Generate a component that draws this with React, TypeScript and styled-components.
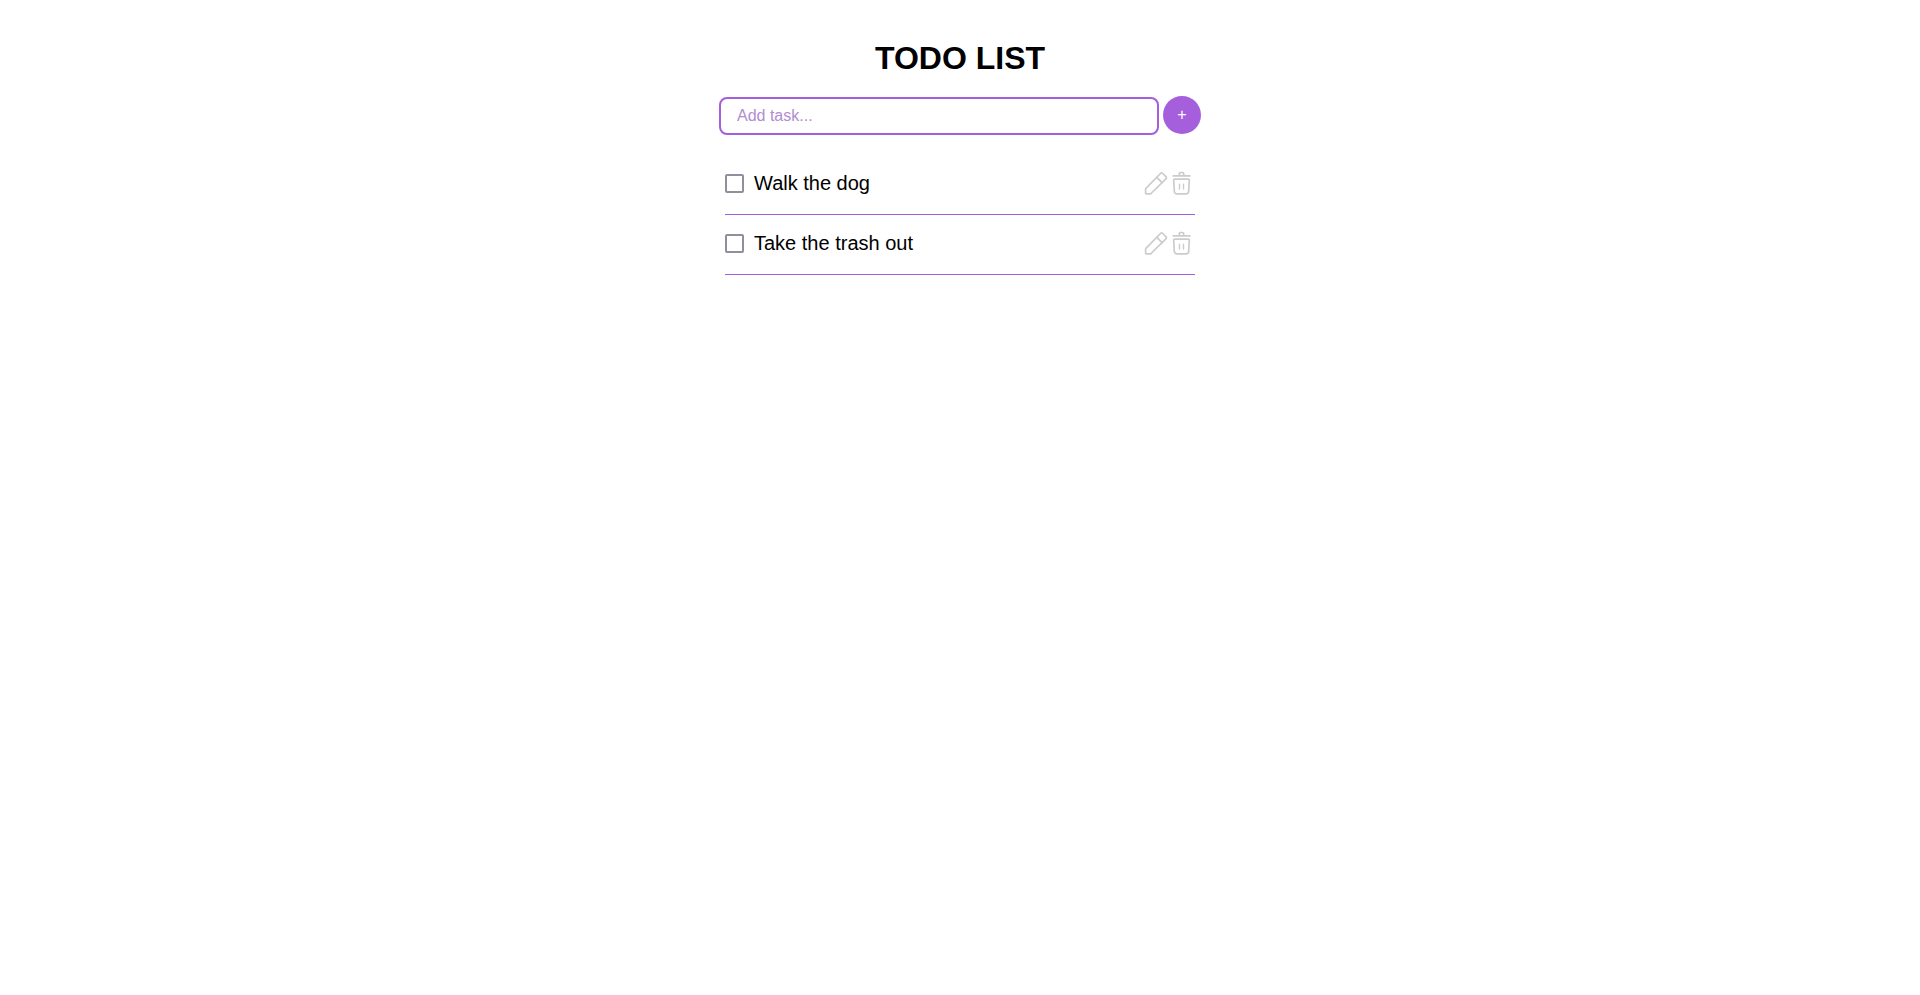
import { useState, type FormEvent } from "react";
import styled, { createGlobalStyle } from "styled-components";

const purple = "#a55fdd";

const GlobalStyle = createGlobalStyle`
  *, *::before, *::after { box-sizing: border-box; }
  body {
    margin: 0;
    background: #fff;
    color: #000;
    font-family: "Liberation Sans", Arial, sans-serif;
  }
`;

const Page = styled.main`
  display: flex;
  flex-direction: column;
  align-items: center;
  padding: 40px 16px;
`;

const Title = styled.h1`
  margin: 0 0 20px;
  font-size: 32px;
  line-height: 36px;
  font-weight: 700;
`;

const TaskForm = styled.form`
  display: flex;
  align-items: flex-start;
  gap: 4px;
  width: 100%;
  max-width: 482px;
`;

const TaskInput = styled.input`
  flex: 1;
  min-width: 0;
  height: 38px;
  margin: 1px 0 0;
  padding: 0 16px;
  border: 2px solid ${purple};
  border-radius: 8px;
  outline: none;
  background: #fff;
  font-family: inherit;
  font-size: 16px;

  &::placeholder {
    color: #b18dcf;
    opacity: 1;
  }
`;

const AddButton = styled.button`
  width: 38px;
  height: 38px;
  padding: 0;
  border: none;
  border-radius: 50%;
  background: ${purple};
  color: #fff;
  font-family: inherit;
  font-size: 16px;
  cursor: pointer;
`;

const TaskList = styled.ul`
  width: 100%;
  max-width: 470px;
  margin: 20px 0 0;
  padding: 0;
  list-style: none;
`;

const TaskRow = styled.li`
  display: flex;
  align-items: center;
  padding: 16px 1px 19px 0;
  border-bottom: 1px solid ${purple};
`;

const TaskLabel = styled.label<{ $done: boolean }>`
  display: flex;
  flex: 1;
  align-items: center;
  gap: 10px;
  font-size: 20px;
  line-height: 24px;
  text-decoration: ${({ $done }) => ($done ? "line-through" : "none")};
`;

const Checkbox = styled.input`
  appearance: none;
  flex: none;
  width: 19px;
  height: 19px;
  margin: 1px 0 0;
  border: 2px solid #8f8f9d;
  border-radius: 2px;
  background: #fff;

  &:checked {
    border-color: ${purple};
    background: ${purple};
  }
`;

const Actions = styled.div`
  display: flex;
  gap: 2px;
`;

const IconButton = styled.button`
  width: 24px;
  height: 24px;
  padding: 0;
  border: none;
  background: none;
  color: #ccc;
  cursor: pointer;

  svg {
    display: block;
    fill: none;
    stroke: currentColor;
    stroke-width: 1.7;
    stroke-linecap: round;
    stroke-linejoin: round;
  }
`;

const PencilIcon = () => (
  <svg width="24" height="24" viewBox="0 0 24 24" aria-hidden="true">
    <path d="M1.9 17.3 16.5 2.5Q17.6 1.4 18.7 2.5L21.9 5.7Q23 6.8 21.9 7.9L7 22.5Q6.5 22.9 5.9 22.9H2.4Q1.6 22.9 1.6 22.1V18.1Q1.6 17.6 1.9 17.3Z" />
    <path d="M12.7 6.3 18.1 11.6" />
  </svg>
);

const TrashIcon = () => (
  <svg width="24" height="24" viewBox="0 0 24 24" aria-hidden="true">
    <path d="M3.3 4.9H19.9M9.3 4.7V2.8Q9.3 1.5 10.5 1.5H12.5Q13.7 1.5 13.7 2.8V4.7" />
    <path d="M4.8 8.2H18.2Q19.4 8.2 19.3 9.3L18.7 20.2Q18.5 22.9 16 22.9H7Q4.5 22.9 4.3 20.2L3.7 9.3Q3.6 8.2 4.8 8.2Z" />
    <path d="M9.5 13.2V18M13.5 13.2V18" strokeWidth="1.4" />
  </svg>
);

interface Task {
  id: number;
  text: string;
  done: boolean;
}

const initialTasks: Task[] = [
  { id: 1, text: "Walk the dog", done: false },
  { id: 2, text: "Take the trash out", done: false },
];

export default function App() {
  const [tasks, setTasks] = useState(initialTasks);
  const [draft, setDraft] = useState("");

  const addTask = (event: FormEvent) => {
    event.preventDefault();
    const text = draft.trim();
    if (!text) return;
    setTasks([...tasks, { id: Date.now(), text, done: false }]);
    setDraft("");
  };

  const toggleTask = (id: number) =>
    setTasks(tasks.map((t) => (t.id === id ? { ...t, done: !t.done } : t)));

  const removeTask = (id: number) => setTasks(tasks.filter((t) => t.id !== id));

  const editTask = (task: Task) => {
    setDraft(task.text);
    removeTask(task.id);
  };

  return (
    <>
      <GlobalStyle />
      <Page>
        <Title>TODO LIST</Title>
        <TaskForm onSubmit={addTask}>
          <TaskInput
            type="text"
            aria-label="Add task"
            placeholder="Add task..."
            value={draft}
            onChange={(event) => setDraft(event.target.value)}
          />
          <AddButton type="submit" aria-label="Add">+</AddButton>
        </TaskForm>
        <TaskList>
          {tasks.map((task) => (
            <TaskRow key={task.id}>
              <TaskLabel $done={task.done} htmlFor={`task-${task.id}`}>
                <Checkbox
                  id={`task-${task.id}`}
                  type="checkbox"
                  checked={task.done}
                  onChange={() => toggleTask(task.id)}
                />
                {task.text}
              </TaskLabel>
              <Actions>
                <IconButton type="button" aria-label="Edit task" onClick={() => editTask(task)}>
                  <PencilIcon />
                </IconButton>
                <IconButton type="button" aria-label="Delete task" onClick={() => removeTask(task.id)}>
                  <TrashIcon />
                </IconButton>
              </Actions>
            </TaskRow>
          ))}
        </TaskList>
      </Page>
    </>
  );
}
